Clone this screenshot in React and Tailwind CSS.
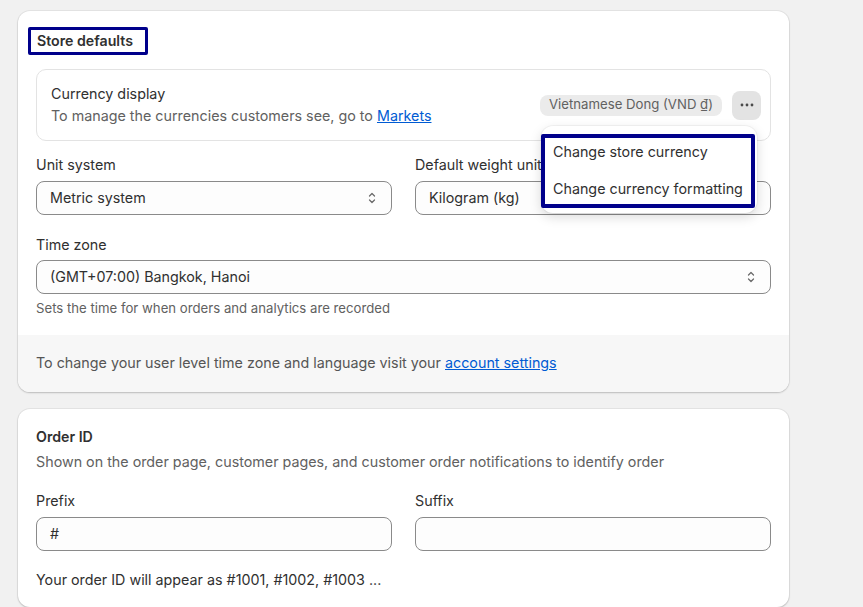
const SelectIcon = () => (
  <svg width="10" height="16" viewBox="0 0 10 16" fill="none">
    <path d="M2.5 6 L5 3.5 L7.5 6" stroke="#6b6b6b" strokeWidth="1.3" strokeLinecap="round" strokeLinejoin="round" />
    <path d="M2.5 10 L5 12.5 L7.5 10" stroke="#6b6b6b" strokeWidth="1.3" strokeLinecap="round" strokeLinejoin="round" />
  </svg>
);

const Field = ({ label, value, select }) => (
  <div>
    <div className="text-[14.3px] leading-5 text-[#303030] mb-[6px]">{label}</div>
    <div className="h-[34px] flex items-center justify-between pl-[13px] pr-[14px] border border-[#8a8a8a] rounded-lg bg-[#fdfdfd] text-[14.3px] text-[#303030]">
      <span>{value}</span>
      {select && <SelectIcon />}
    </div>
  </div>
);

const App = () => {
  return (
    <div className="min-h-[607px] bg-[#f1f1f1] pl-[18px] pt-[11px] font-['Inter',sans-serif]">
      <div className="w-[771px] space-y-[17px]">
        {/* Store defaults */}
        <div className="bg-white rounded-xl shadow-[0_0_0_1px_rgba(0,0,0,0.05),0_1px_2px_rgba(0,0,0,0.18)]">
          <div className="px-[18px] pt-4 pb-[17px]">
            <div className="-ml-2 w-[120px] h-[28px] border-[3px] border-[#00008b] rounded-[2px] pl-[6px] flex items-center text-[14.2px] font-semibold text-[#303030]">
              Store defaults
            </div>

            <div className="relative mt-[14px] border border-[#e3e3e3] rounded-[10px] pl-[14px] pr-[9px] pt-[14px] pb-[14px] flex items-center justify-between">
              <div className="text-[14.3px] leading-5">
                <div className="text-[#303030]">Currency display</div>
                <div className="text-[#616161] mt-[2px]">
                  To manage the currencies customers see, go to{" "}
                  <a className="text-[#005bd3] underline">Markets</a>
                </div>
              </div>
              <div className="flex items-center gap-[10px]">
                <span className="bg-[#ebebeb] rounded-lg px-[9px] h-[21px] flex items-center text-[13.2px] text-[#616161]">
                  Vietnamese Dong (VND ₫)
                </span>
                <button className="w-[29px] h-[29px] rounded-lg bg-[#e3e3e3] flex items-center justify-center">
                  <svg width="14" height="4" viewBox="0 0 14 4">
                    <circle cx="2" cy="2" r="1.4" fill="#4a4a4a" />
                    <circle cx="7" cy="2" r="1.4" fill="#4a4a4a" />
                    <circle cx="12" cy="2" r="1.4" fill="#4a4a4a" />
                  </svg>
                </button>
              </div>

              {/* popover menu */}
              <div className="absolute z-10 top-[56px] right-[13px] w-[216px] h-[87px] bg-white rounded-xl shadow-[0_4px_12px_rgba(0,0,0,0.15),0_0_0_1px_rgba(0,0,0,0.04)] pt-[8px] pr-[2px] pb-[5px]">
                <div className="h-full border-4 border-[#00008b] rounded-[2px] flex flex-col justify-between text-[14.3px] text-[#303030]">
                  <div className="h-[28px] flex items-center pl-2">Change store currency</div>
                  <div className="h-[30px] flex items-center pl-2">Change currency formatting</div>
                </div>
              </div>
            </div>

            <div className="grid grid-cols-2 gap-x-[23px] mt-[14px]">
              <Field label="Unit system" value="Metric system" select />
              <Field label="Default weight unit" value="Kilogram (kg)" select />
            </div>

            <div className="mt-5">
              <div className="text-[14.3px] leading-5 text-[#303030] mb-[5px]">Time zone</div>
              <div className="h-[34px] flex items-center justify-between pl-[13px] pr-[14px] border border-[#8a8a8a] rounded-lg bg-[#fdfdfd] text-[14.3px] text-[#303030]">
                <span>(GMT+07:00) Bangkok, Hanoi</span>
                <SelectIcon />
              </div>
              <div className="mt-1 text-[13.2px] leading-5 text-[#616161]">
                Sets the time for when orders and analytics are recorded
              </div>
            </div>
          </div>

          <div className="bg-[#f7f7f7] rounded-b-xl px-[18px] pt-[18px] pb-[19px] text-[14.3px] leading-5 text-[#555555]">
            To change your user level time zone and language visit your{" "}
            <a className="text-[#005bd3] underline">account settings</a>
          </div>
        </div>

        {/* Order ID */}
        <div className="bg-white rounded-xl shadow-[0_0_0_1px_rgba(0,0,0,0.05),0_1px_2px_rgba(0,0,0,0.18)] px-[18px] pt-[18px] pb-[17px]">
          <div className="text-[14.2px] leading-5 font-semibold text-[#303030]">Order ID</div>
          <div className="mt-[5px] text-[14.3px] leading-5 text-[#616161]">
            Shown on the order page, customer pages, and customer order notifications to identify order
          </div>
          <div className="grid grid-cols-2 gap-x-[23px] mt-[19px]">
            <Field label="Prefix" value="#" />
            <Field label="Suffix" value="" />
          </div>
          <div className="mt-[19px] text-[14.3px] leading-5 text-[#303030]">
            Your order ID will appear as #1001, #1002, #1003 ...
          </div>
        </div>
      </div>
    </div>
  );
};

export default App;
